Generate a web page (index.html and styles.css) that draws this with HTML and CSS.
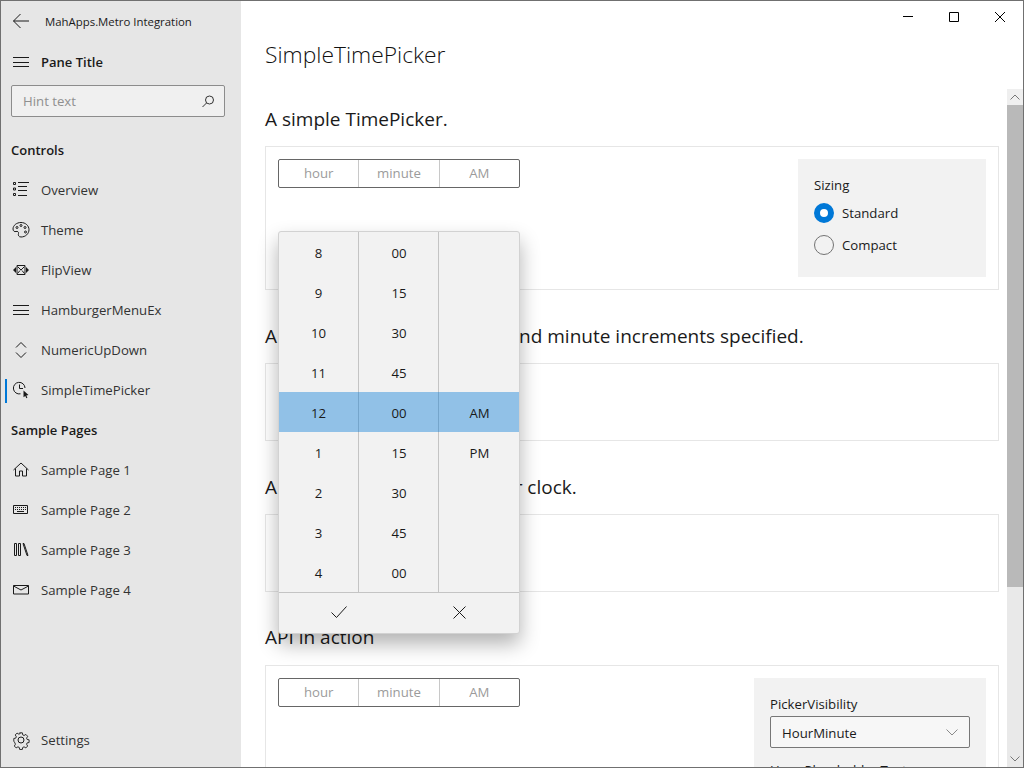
FILE: index.html
```html
<!DOCTYPE html>
<html lang="en">
<head>
<meta charset="UTF-8" />
<title>SimpleTimePicker</title>
<link rel="stylesheet" href="styles.css">
</head>
<body>
<div class="window">

  <aside class="pane">
    <div class="app-title">
      <svg class="icon" viewBox="0 0 20 20"><path d="M18 10H2.500M9.500 3l-7 7 7 7"/></svg>
      <span>MahApps.Metro Integration</span>
    </div>
    <div class="pane-title">
      <svg class="icon" viewBox="0 0 20 20"><path d="M2 5.500h16M2 10.500h16M2 14.500h16"/></svg>
      <span>Pane Title</span>
    </div>
    <div class="search">
      <span>Hint text</span>
      <svg viewBox="0 0 16 16"><circle cx="10.500" cy="7" r="4"/><path d="M7.500 10L3.500 14"/></svg>
    </div>

    <div class="group-title">Controls</div>
    <a class="nav-item">
      <svg class="icon" viewBox="0 0 20 20"><path d="M2.500 2.500h2v2h-2zM2.500 8h2v2h-2zM2.500 13.500h2v2h-2zM7 2.500h11M7 6.500h9M7 10.500h9M7 15.500h9"/></svg>
      <span>Overview</span>
    </a>
    <a class="nav-item">
      <svg class="icon" viewBox="0 0 20 20"><path d="M10 2.500c-4.500 0-8 3-8 6.500 0 2 1.500 3 3 2.500 1.500-.5 3 .5 2.500 2-.5 1.500 0 3.500 2.500 3.500 4.500 0 8-3.300 8-7.300S14.500 2.500 10 2.500z"/><circle cx="6" cy="7.500" r="1"/><circle cx="10" cy="5.500" r="1"/><circle cx="14" cy="7.500" r="1"/><circle cx="14.500" cy="12" r="1"/></svg>
      <span>Theme</span>
    </a>
    <a class="nav-item">
      <svg class="icon" viewBox="0 0 20 20"><path d="M6 5.500h8v9H6zM6.500 6.500l3.500 3.500 3.500-3.500M6.500 13.500l2.500-3M13.500 13.500l-2.500-3"/><path class="solid" d="M2 10l3-3v6zM18 10l-3-3v6z"/></svg>
      <span>FlipView</span>
    </a>
    <a class="nav-item">
      <svg class="icon" viewBox="0 0 20 20"><path d="M2 5.500h16M2 10.500h16M2 14.500h16"/></svg>
      <span>HamburgerMenuEx</span>
    </a>
    <a class="nav-item">
      <svg class="icon" viewBox="0 0 20 20"><path d="M5 7.500L10 2.500l5 5M5 12.500l5 5 5-5"/></svg>
      <span>NumericUpDown</span>
    </a>
    <a class="nav-item selected">
      <svg class="icon" viewBox="0 0 20 20"><path d="M9.500 13.800A5.800 5.800 0 1 1 14 8M8.500 4.500v4h3.500"/><path class="solid" d="M12.500 10.500l5 4.500-2.200.4 1.100 2.300-1 .5-1.100-2.300-1.800 1.400z"/></svg>
      <span>SimpleTimePicker</span>
    </a>

    <div class="group-title">Sample Pages</div>
    <a class="nav-item">
      <svg class="icon" viewBox="0 0 20 20"><path d="M2.500 10L10 3l7.500 7M4.500 8.500v7.500h4v-5h3v5h4V8.500"/></svg>
      <span>Sample Page 1</span>
    </a>
    <a class="nav-item">
      <svg class="icon" viewBox="0 0 20 20"><path d="M2.500 5.500h14v8h-14z"/><path d="M4 7.500h11M4 9.500h11" stroke-dasharray="1 1"/><path d="M6 11.500h7"/></svg>
      <span>Sample Page 2</span>
    </a>
    <a class="nav-item">
      <svg class="icon" viewBox="0 0 20 20"><path d="M3.500 3.500h2v12h-2zM7.500 3.500h2v12h-2zM12 3.500h1l4 12h-1z"/></svg>
      <span>Sample Page 3</span>
    </a>
    <a class="nav-item">
      <svg class="icon" viewBox="0 0 20 20"><path d="M2.500 5.500h15v8.500h-15zM2.500 6l7.500 4 7.500-4"/></svg>
      <span>Sample Page 4</span>
    </a>

    <a class="nav-item settings">
      <svg class="icon" viewBox="0 0 20 20"><circle cx="10" cy="10" r="3"/><path d="M8.500 2h3l.4 2.300 1.500.7 2-1.200 2 2.100-1.200 2 .6 1.500 2.200.4v3l-2.200.4-.6 1.500 1.200 2-2 2.100-2-1.200-1.500.7-.4 2.200h-3l-.4-2.200-1.500-.7-2 1.200-2-2.100 1.200-2-.6-1.500L2 11.300v-3l2.200-.4.600-1.500-1.200-2 2-2.100 2 1.200 1.500-.7z" transform="translate(1 1) scale(.9)"/></svg>
      <span>Settings</span>
    </a>
  </aside>

  <main class="content">
    <div class="caption">
      <svg viewBox="0 0 10 10"><path d="M0 4.500h10"/></svg>
      <svg viewBox="0 0 10 10"><path d="M.5.500h9v9h-9z"/></svg>
      <svg viewBox="0 0 10 10"><path d="M0 0l10 10M10 0L0 10"/></svg>
    </div>

    <div class="scroller">
      <h1 class="page-title">SimpleTimePicker</h1>

      <h2 class="section-title">A simple TimePicker.</h2>
      <section class="card">
        <div class="picker">
          <span>hour</span><span>minute</span><span>AM</span>
        </div>
        <div class="options">
          <div class="label">Sizing</div>
          <div class="radio checked"><i></i>Standard</div>
          <div class="radio"><i></i>Compact</div>
        </div>
      </section>

      <h2 class="section-title">A TimePicker with the hour and minute increments specified.</h2>
      <section class="card card-short"></section>

      <h2 class="section-title">A TimePicker using a 24-hour clock.</h2>
      <section class="card card-short"></section>

      <h2 class="section-title title-api">API in action</h2>
      <section class="card card-last">
        <div class="picker">
          <span>hour</span><span>minute</span><span>AM</span>
        </div>
        <div class="options options-wide">
          <div class="label">PickerVisibility</div>
          <div class="combo">
            <span>HourMinute</span>
            <svg viewBox="0 0 12 7"><path d="M.5.500L6 6 11.500.500"/></svg>
          </div>
          <div class="label label-next">Hour Placeholder Text</div>
        </div>
      </section>
    </div>

    <div class="scrollbar">
      <div class="arrow"><svg viewBox="0 0 10 6"><path d="M.5 5.500L5 1l4.500 4.500"/></svg></div>
      <div class="thumb"></div>
      <div class="track"></div>
      <div class="arrow"><svg viewBox="0 0 10 6"><path d="M.5.500L5 5 9.500.500"/></svg></div>
    </div>

    <div class="popup">
      <div class="columns">
        <div class="col">
          <span>8</span><span>9</span><span>10</span><span>11</span><span>12</span><span>1</span><span>2</span><span>3</span><span>4</span>
        </div>
        <div class="col">
          <span>00</span><span>15</span><span>30</span><span>45</span><span>00</span><span>15</span><span>30</span><span>45</span><span>00</span>
        </div>
        <div class="col">
          <span></span><span></span><span></span><span></span><span>AM</span><span>PM</span><span></span><span></span><span></span>
        </div>
        <div class="highlight"></div>
      </div>
      <div class="actions">
        <button><svg viewBox="0 0 16 12"><path d="M.5 6.500L5.500 11.500 15.500.500"/></svg></button>
        <button><svg viewBox="0 0 13 13"><path d="M.5.500l12 12M12.500.500l-12 12"/></svg></button>
      </div>
    </div>
  </main>
</div>
</body>
</html>
```

FILE: styles.css
```css
* { box-sizing: border-box; }
html, body { margin: 0; height: 100%; overflow: hidden; }
body { font-family: "Open Sans", "Noto Sans", sans-serif; font-size: 13.2px; color: #1a1a1a; background: #fff; }
svg { fill: none; stroke: currentColor; stroke-width: 1; display: block; }
svg .solid { fill: currentColor; stroke: none; }

.window { display: flex; width: 1024px; height: 768px; border: 1px solid #707070; overflow: hidden; }

/* left pane */
.pane { width: 240px; flex: none; background: #e6e6e6; display: flex; flex-direction: column; }
.icon { width: 20px; height: 20px; flex: none; color: #1a1a1a; }
.app-title { height: 40px; display: flex; align-items: center; padding-left: 10px; gap: 14px; font-size: 11.4px; }
.pane-title { height: 40px; margin-top: 1px; display: flex; align-items: center; padding-left: 10px; gap: 10px; font-weight: 600; font-size: 13px; }
.search { margin: 3px 16px 0 10px; height: 32px; display: flex; align-items: center; justify-content: space-between; padding: 0 9px 0 11px; background: #f0f0f0; border: 1px solid #8c8c8c; border-radius: 2px; color: #8f8f8f; }
.search svg { width: 16px; height: 16px; color: #333; }
.group-title { height: 40px; display: flex; align-items: center; padding-left: 10px; font-weight: 600; font-size: 13px; }
.search + .group-title { margin-top: 13px; }
.nav-item { position: relative; height: 40px; display: flex; align-items: center; padding-left: 10px; gap: 10px; color: #333; }
.nav-item.selected::before { content: ""; position: absolute; left: 4px; top: 9px; width: 2px; height: 24px; background: #0078d7; }
.settings { margin-top: auto; margin-bottom: 7px; }

/* content */
.content { position: relative; flex: 1; min-width: 0; display: flex; flex-direction: column; }
.caption { position: absolute; top: 11px; right: 18px; display: flex; gap: 36px; }
.caption svg { width: 10px; height: 10px; color: #000; }
.scroller { padding: 0 24px; }
.page-title { margin: 35px 0 0; height: 38px; line-height: 38px; font-size: 22.8px; font-weight: 300; color: #111; }
.section-title { margin: 0; height: 32px; line-height: 32px; font-size: 19px; font-weight: 400; color: #1a1a1a; }
.page-title + .section-title { margin-top: 29px; }
.title-api { height: 30px; line-height: 30px; margin-bottom: 13px; }
.card { display: flex; justify-content: space-between; align-items: flex-start; width: 734px; height: 144px; margin: 11px 0 30px; padding: 12px; border: 1px solid #e6e6e6; }
.card-short { height: 78px; }
.card-last { height: 200px; margin: 0; }

.picker { display: flex; width: 242px; height: 29px; border: 1px solid #666; border-radius: 2px; }
.picker span { flex: 1; padding-bottom: 2px; display: flex; align-items: center; justify-content: center; color: #9b9b9b; }
.picker span + span { border-left: 1px solid #c8c8c8; }

.options { width: 188px; height: 118px; padding: 16px; background: #f2f2f2; }
.options-wide { width: 232px; height: 200px; }
.label { line-height: 20px; margin-bottom: 2px; }
.label-next { margin-top: 12px; }
.radio { display: flex; align-items: center; gap: 8px; height: 32px; }
.radio i { width: 20px; height: 20px; border: 1px solid #737373; border-radius: 50%; }
.radio.checked i { border: 6px solid #0078d7; background: #fff; }
.combo { display: flex; align-items: center; justify-content: space-between; height: 32px; padding: 2px 11px 0; background: #f7f7f7; border: 1px solid #777; border-radius: 2px; }
.combo svg { width: 12px; height: 7px; margin-bottom: 2px; color: #8a8a8a; }

/* scrollbar */
.scrollbar { position: absolute; right: 0; top: 88px; bottom: 0; width: 16px; display: flex; flex-direction: column; background: #e9e9e9; }
.arrow { height: 16px; flex: none; display: flex; align-items: center; justify-content: center; background: #efefef; color: #777; }
.arrow:last-child { background: #e9e9e9; }
.arrow svg { width: 10px; height: 6px; }
.thumb { height: 482px; background: #b9b9b9; }
.track { flex: 1; }

/* time picker flyout */
.popup { position: absolute; left: 37px; top: 230px; width: 242px; background: #f2f2f2; border: 1px solid #d2d2d2; border-radius: 3px; box-shadow: 0 10px 20px rgba(0, 0, 0, .3); color: #1a1a1a; overflow: hidden; }
.columns { position: relative; display: flex; height: 360px; }
.col { flex: none; width: 80px; display: flex; flex-direction: column; }
.col:first-child { width: 79px; }
.col:nth-child(3) { flex: 1; }
.col + .col { border-left: 1px solid #c4c4c4; }
.col + .col span { padding-left: 1px; }
.col span { position: relative; z-index: 1; height: 40px; padding-top: 2px; display: flex; align-items: center; justify-content: center; }
.highlight { position: absolute; left: 0; right: 0; top: 160px; height: 40px; background: rgba(0, 120, 215, .4); }
.actions { display: flex; height: 41px; padding-bottom: 2px; border-top: 1px solid #c4c4c4; }
.actions button { flex: 1; display: flex; align-items: center; justify-content: center; padding: 0; background: none; border: none; color: #1a1a1a; }
.actions button:first-child svg { width: 16px; height: 12px; }
.actions button:last-child svg { width: 13px; height: 13px; }
```
